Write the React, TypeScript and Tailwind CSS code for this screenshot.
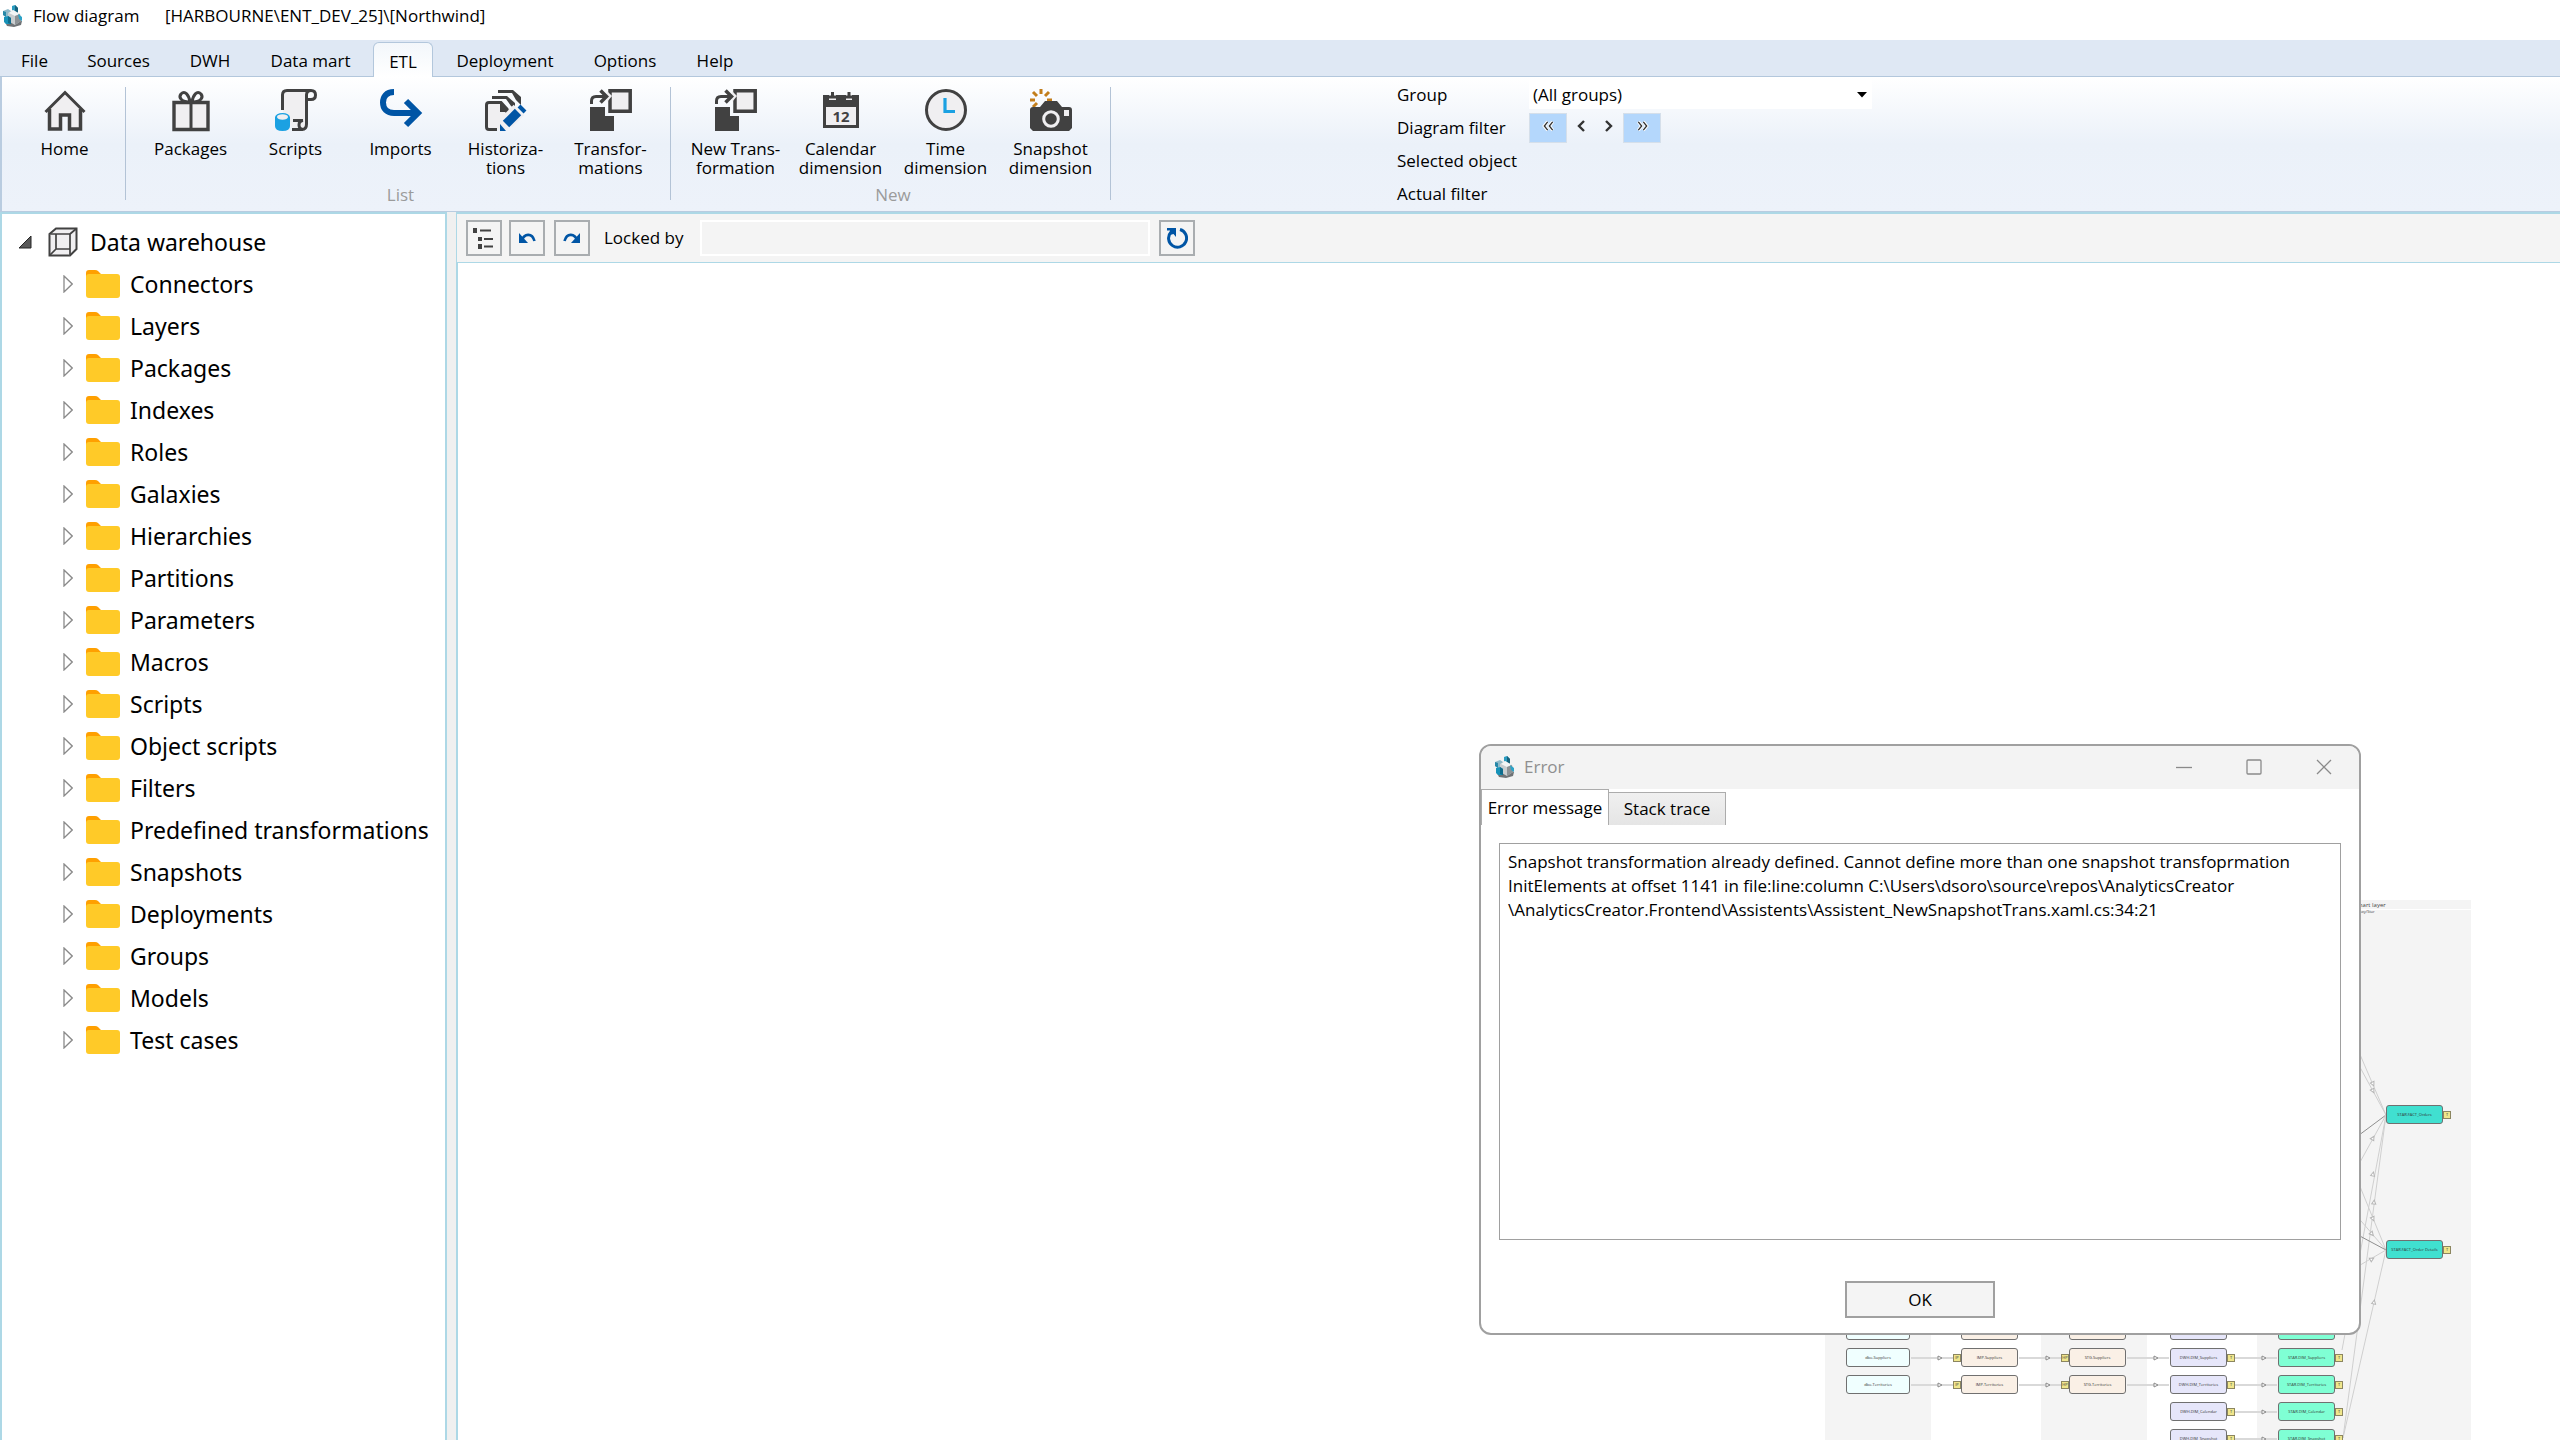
import React from "react";

const DARK = "#414141";
const PALE = "#f0eff1";
const BLUE = "#0055a5";

type IconProps = { children: React.ReactNode };

function RibbonIcon({ children }: IconProps) {
  return (
    <svg viewBox="0 0 42 42" className="h-[42px] w-[42px] overflow-visible" fill="none" aria-hidden="true">
      {children}
    </svg>
  );
}

function AppLogo() {
  return (
    <svg viewBox="0 0 22 24" className="h-6 w-[22px] shrink-0" aria-hidden="true">
      <path d="M3 18 L10 15 L20 17 L19 21 L12 23 L5 22 Z" fill="#6f7376" />
      <path d="M10 2 L13 1 L16 4 L16 9 L10 9 Z" fill="#2b9cc0" />
      <path d="M13 1 L16 4 L16 9 L13 8 Z" fill="#17627c" />
      <path d="M1 7 L6 5 L9 7 L9 11 L4 13 L1 11 Z" fill="#8fb9c8" />
      <path d="M1 7 L4 8 L4 13 L1 11 Z" fill="#2788a8" />
      <path d="M6 9 L11 6 L18 10 L19 17 L13 21 L6 17 Z" fill="#c9cdcf" />
      <path d="M11 6 L18 10 L13 12 L7 9 Z" fill="#f3f5f5" />
      <path d="M13 12 L18 10 L19 17 L13 21 Z" fill="#8d9295" />
      <path d="M2 13 L6 12 L9 14 L9 20 L4 20 L2 18 Z" fill="#1792b8" />
      <path d="M16 10 L20 13 L20 17 L17 15 Z" fill="#2ba3c8" />
      <path d="M6 12 L9 14 L9 20 L6 19 Z" fill="#0f6c8c" />
    </svg>
  );
}

function HomeIcon() {
  return (
    <RibbonIcon>
      <path d="M5 20 L21 4 L37 20 V40 H26 V26 H16 V40 H5 Z" fill={PALE} />
      <path d="M1.500 23 L21 3.500 L40.500 23" stroke={DARK} strokeWidth="3" />
      <path d="M5.500 20 V40 H16.500 V26 H25.500 V40 H36.500 V20" stroke={DARK} strokeWidth="3.500" />
    </RibbonIcon>
  );
}

function GiftIcon() {
  return (
    <RibbonIcon>
      <path d="M4 13.500 H38 V40.500 H4 Z" fill={PALE} stroke={DARK} strokeWidth="3.400" />
      <path d="M21 13 V40" stroke={DARK} strokeWidth="3" />
      <path
        d="M20 13 C12 13 8 9 11 5 C15 1 19 6 20 13 M22 13 C30 13 34 9 31 5 C27 1 23 6 22 13"
        stroke={DARK}
        strokeWidth="3"
      />
    </RibbonIcon>
  );
}

function ScriptIcon() {
  return (
    <RibbonIcon>
      <path d="M8 3 H33 V37 Q32 40 28 40 H18 L8 26 Z" fill={PALE} />
      <path
        d="M7.500 21 V6 Q7.500 1.500 12 1.500 H36 M36 1.500 Q31.500 1.500 31.500 6 V35 Q31.500 40.500 27 40.500 H17"
        stroke={DARK}
        strokeWidth="3"
      />
      <path d="M36 1.500 Q40.500 1.500 40.500 6 Q40.500 10.500 36 10.500 H32" stroke={DARK} strokeWidth="3" />
      <path d="M18 31.500 H28 Q24 32 24 36 Q24 40 28 40.500" stroke={DARK} strokeWidth="3" />
      <path d="M0 28 V37 Q0 42 7.500 42 Q15 42 15 37 V28 Z" fill="#1ba1e2" />
      <ellipse cx="7.500" cy="28.500" rx="7.500" ry="4.500" fill="#1ba1e2" />
      <ellipse cx="7.500" cy="28" rx="5.500" ry="2.700" fill={PALE} />
    </RibbonIcon>
  );
}

function ImportIcon() {
  return (
    <RibbonIcon>
      <path d="M14 3 C6 3 3 8 3 13.500 C3 20 7 24 14 24 H37" stroke={BLUE} strokeWidth="6" />
      <path d="M26 12 L38 24 L26 36" stroke={BLUE} strokeWidth="6" />
    </RibbonIcon>
  );
}

function HistoryIcon() {
  return (
    <RibbonIcon>
      <path d="M13 1 H28 L36 8 V16 L31 11 L27 4 H13 Z" fill={DARK} />
      <path d="M7 7 H22 L30 14 V20 L26 17 L21 10 H7 Z" fill={DARK} />
      <path d="M3 13.500 H15 L23 20 V40.500 H5 Q1.500 40.500 1.500 37 V15 Q1.500 13.500 3 13.500 Z" fill={PALE} />
      <path d="M12 40.500 H4 Q1.500 40.500 1.500 38 V16 Q1.500 13.500 4 13.500 H16 L22 20 V24" stroke={DARK} strokeWidth="3" />
      <path d="M15 13 L24 21 V23 H15 Z" fill={DARK} />
      <path d="M22 33 L34 21" stroke={PALE} strokeWidth="15" />
      <path d="M21 35 L33 23" stroke={BLUE} strokeWidth="9" />
      <path d="M34 17 L40 23" stroke={BLUE} strokeWidth="4" />
      <path d="M15 35 L21 42 H15 Z" fill={BLUE} />
    </RibbonIcon>
  );
}

function TransformIcon() {
  return (
    <RibbonIcon>
      <path d="M0 18 H15 V27 H24 V42 H0 Z" fill={DARK} />
      <path d="M20 1.800 H40.200 V22.200 H20 Z" fill={PALE} stroke={DARK} strokeWidth="3.500" />
      <path d="M17 2 L22 7 L17 13 Z" fill={PALE} />
      <path d="M1.500 15 V12 Q1.500 7.500 6 7.500 H16" stroke={DARK} strokeWidth="3" />
      <path d="M10.500 1.500 L16.500 7.500 L10.500 13.500" stroke={DARK} strokeWidth="3.500" />
    </RibbonIcon>
  );
}

function CalendarIcon() {
  return (
    <RibbonIcon>
      <path d="M4.500 8 H37.500 V37.500 H4.500 Z" fill={PALE} stroke={DARK} strokeWidth="3" />
      <path d="M3 6 H9 V11 H16 V6 H26 V11 H32 V6 H39 V18 H3 Z" fill={DARK} />
      <path d="M12.500 3 V9 M29 3 V9" stroke={DARK} strokeWidth="3" />
      <text x="21" y="33" textAnchor="middle" fontSize="15" fontWeight="700" fill={DARK} className="font-['Noto_Sans',sans-serif]">
        12
      </text>
    </RibbonIcon>
  );
}

function ClockIcon() {
  return (
    <RibbonIcon>
      <circle cx="21" cy="21" r="19.500" fill={PALE} stroke={DARK} strokeWidth="3" />
      <path d="M20 9 V22.500 H30" stroke="#1ba1e2" strokeWidth="3.200" />
    </RibbonIcon>
  );
}

function CameraIcon() {
  return (
    <RibbonIcon>
      <path
        d="M11 0 V5 M3 3 L7 7 M19 3 L15 7 M0 11 H5 M17 11 H22 M3 18 L7 14"
        stroke="#c27d1a"
        strokeWidth="3"
      />
      <path d="M3 18 H10 L15 12 H27 L32 18 H39 Q42 18 42 21 V39 L39 42 H3 L0 39 V21 Q0 18 3 18 Z" fill={DARK} />
      <circle cx="21" cy="30" r="7.300" fill={DARK} stroke={PALE} strokeWidth="3" />
      <path d="M34 21 H39 V27 H34 Z" fill={PALE} />
    </RibbonIcon>
  );
}

type Tool = { label: string[]; icon: React.ReactNode };

const listTools: Tool[] = [
  { label: ["Packages"], icon: <GiftIcon /> },
  { label: ["Scripts"], icon: <ScriptIcon /> },
  { label: ["Imports"], icon: <ImportIcon /> },
  { label: ["Historiza-", "tions"], icon: <HistoryIcon /> },
  { label: ["Transfor-", "mations"], icon: <TransformIcon /> },
];

const newTools: Tool[] = [
  { label: ["New Trans-", "formation"], icon: <TransformIcon /> },
  { label: ["Calendar", "dimension"], icon: <CalendarIcon /> },
  { label: ["Time", "dimension"], icon: <ClockIcon /> },
  { label: ["Snapshot", "dimension"], icon: <CameraIcon /> },
];

function RibbonGroup({ title, tools }: { title: string; tools: Tool[] }) {
  return (
    <div className="flex">
      <div className="flex flex-col justify-between pr-[7px] pl-3">
        <div className="flex">
          {tools.map((tool) => (
            <button key={tool.label.join("")} className="flex w-[105px] flex-col items-center pt-3">
              {tool.icon}
              <span className="mt-2 flex flex-col text-center text-[17px] leading-[19px] whitespace-nowrap">
                {tool.label.map((line) => (
                  <span key={line}>{line}</span>
                ))}
              </span>
            </button>
          ))}
        </div>
        <div className="h-[26px] text-center text-[17px] leading-5 text-[#9b9b9b]">{title}</div>
      </div>
      <div className="mt-[10px] mb-[11px] w-px bg-[#b3c3d6]" />
    </div>
  );
}

const menus = [
  { label: "File", width: "w-[69px]" },
  { label: "Sources", width: "w-[99px]" },
  { label: "DWH", width: "w-[84px]" },
  { label: "Data mart", width: "w-[117px]" },
  { label: "ETL", width: "w-[60px]" },
  { label: "Deployment", width: "w-[144px]" },
  { label: "Options", width: "w-24" },
  { label: "Help", width: "w-[84px]" },
];

function MenuBar() {
  return (
    <nav className="flex h-[37px] items-end border-b border-[#b3c7dc] bg-[#dfe8f4] text-[17px]">
      {menus.map((m) =>
        m.label === "ETL" ? (
          <button
            key={m.label}
            className={
              "relative top-px ml-1 h-[35px] rounded-t-md border border-b-0 border-[#b3c7dc] bg-gradient-to-b from-[#f3f7fb] to-white pt-1 " +
              m.width
            }
          >
            {m.label}
          </button>
        ) : (
          <button key={m.label} className={"h-[34px] pt-1 whitespace-nowrap " + m.width}>
            {m.label}
          </button>
        ),
      )}
    </nav>
  );
}

const chevrons = {
  first: "M8 2 L4 7 L8 12 M14 2 L10 7 L14 12",
  prev: "M12 2 L7 7 L12 12",
  next: "M6 2 L11 7 L6 12",
  last: "M4 2 L8 7 L4 12 M10 2 L14 7 L10 12",
};

function StepButton({ name, path, strong }: { name: string; path: string; strong?: boolean }) {
  return (
    <button
      aria-label={name}
      className={
        strong
          ? "flex h-[30px] w-[38px] items-center justify-center border border-[#d5dfea] bg-[#b4d7fc] pb-1"
          : "flex h-[30px] w-7 items-center justify-center pb-1"
      }
    >
      <svg viewBox="0 0 18 14" className={strong ? "h-3 w-[15px]" : "h-[14px] w-[18px]"} fill="none" aria-hidden="true">
        {strong && <path d={path} stroke="#ffffff" strokeWidth="4" />}
        <path d={path} stroke="#333333" strokeWidth={strong ? "1.600" : "2.400"} />
      </svg>
    </button>
  );
}

function Ribbon() {
  return (
    <div className="flex h-[134px] border-l-2 border-[#b9cce0] bg-gradient-to-b from-white via-[#ebf1f9] to-[#edf2fa]">
      <div className="flex">
        <button className="mr-2 ml-[10px] flex w-[105px] flex-col items-center pt-3">
          <HomeIcon />
          <span className="mt-2 text-[17px] leading-[19px]">Home</span>
        </button>
        <div className="mt-[10px] mb-[11px] w-px bg-[#b3c3d6]" />
      </div>
      <RibbonGroup title="List" tools={listTools} />
      <RibbonGroup title="New" tools={newTools} />
      <div className="ml-[286px] grid grid-cols-[132px_343px] auto-rows-[33px] items-center pt-px text-[17px]">
        <label htmlFor="group">Group</label>
        <div className="relative h-[29px]">
          <select id="group" className="h-full w-full appearance-none bg-white pr-6 pl-1 leading-5">
            <option>(All groups)</option>
          </select>
          <svg viewBox="0 0 10 6" className="pointer-events-none absolute top-3 right-[5px] h-[6px] w-[10px]" aria-hidden="true">
            <path d="M0 0 H10 L5 5.500 Z" fill="#000000" />
          </svg>
        </div>
        <span>Diagram filter</span>
        <div className="flex items-center">
          <StepButton name="First" path={chevrons.first} strong />
          <StepButton name="Previous" path={chevrons.prev} />
          <StepButton name="Next" path={chevrons.next} />
          <StepButton name="Last" path={chevrons.last} strong />
        </div>
        <span>Selected object</span>
        <span />
        <span>Actual filter</span>
        <span />
      </div>
    </div>
  );
}

const folders = [
  "Connectors", "Layers", "Packages", "Indexes", "Roles", "Galaxies", "Hierarchies", "Partitions", "Parameters",
  "Macros", "Scripts", "Object scripts", "Filters", "Predefined transformations", "Snapshots", "Deployments",
  "Groups", "Models", "Test cases",
];

function FolderTree() {
  return (
    <aside className="w-[447px] shrink-0 overflow-hidden border-2 border-b-0 border-[#add8e6] bg-white pt-[7px] font-['Noto_Sans','Open_Sans',sans-serif] text-[23px] leading-[30px]">
      <button className="flex h-[42px] items-center pl-4 whitespace-nowrap">
        <svg viewBox="0 0 14 14" className="h-[14px] w-[14px]" aria-hidden="true">
          <path d="M1 13 L13 1 V13 Z" fill="#595959" stroke="#262626" />
        </svg>
        <svg viewBox="0 0 30 30" className="ml-4 h-[30px] w-[30px]" fill={PALE} stroke={DARK} strokeWidth="2" aria-hidden="true">
          <path d="M1.500 7 L8 1.500 H28.500 V22 L22 28.500 H1.500 Z" />
          <path d="M1.500 7 H22 V28.500 M22 7 L28.500 1.500 M8 7 V22 H22 M8 22 L1.500 28.500" strokeWidth="1.700" />
        </svg>
        <span className="ml-3">Data warehouse</span>
      </button>
      <ul>
        {folders.map((name) => (
          <li key={name}>
            <button className="flex h-[42px] items-center pl-[61px] whitespace-nowrap">
              <svg viewBox="0 0 10 18" className="h-[18px] w-[10px]" fill="white" stroke="#8a8a8a" strokeWidth="1.300" aria-hidden="true">
                <path d="M1 1 L9.200 9 L1 17 Z" />
              </svg>
              <svg viewBox="0 0 34 28" className="ml-[13px] h-7 w-[34px]" aria-hidden="true">
                <path d="M0 12 V3 Q0 0 3 0 H9 Q11 0 12 1 L15 4 H30 V12 Z" fill="#ffa000" />
                <rect y="4" width="34" height="24" rx="3" fill="#ffca28" />
              </svg>
              <span className="ml-[10px]">{name}</span>
            </button>
          </li>
        ))}
      </ul>
    </aside>
  );
}

function Toolbar() {
  const square = "flex h-9 w-9 items-center justify-center border-2 border-[#a9adb0] bg-[#f4f4f4]";
  return (
    <div className="flex h-[51px] items-center border-t-2 border-b border-l border-[#add8e6] bg-[#f4f4f4] pl-[9px] text-[17px]">
      <button aria-label="Structure" className={square}>
        <svg viewBox="0 0 22 22" className="h-[22px] w-[22px]" aria-hidden="true">
          <path d="M0 1 H4 V6 H0 Z M5 10 H9 V14 H5 Z M5 17 H9 V22 H5 Z M7 2.500 H18 V4.500 H7 Z M11 11 H20 V13 H11 Z M11 18.500 H20 V20.500 H11 Z" fill={DARK} />
        </svg>
      </button>
      <button aria-label="Undo" className={"ml-[7px] " + square}>
        <svg viewBox="0 0 18 12" className="h-3 w-[18px]" fill="none" aria-hidden="true">
          <path d="M4 8 C6 2 14 0 16.500 9" stroke={BLUE} strokeWidth="2.600" />
          <path d="M1 1 V11 H10 Z" fill={BLUE} />
        </svg>
      </button>
      <button aria-label="Redo" className={"ml-[9px] " + square}>
        <svg viewBox="0 0 18 12" className="h-3 w-[18px]" fill="none" aria-hidden="true">
          <path d="M14 8 C12 2 4 0 1.500 9" stroke={BLUE} strokeWidth="2.600" />
          <path d="M17 1 V11 H8 Z" fill={BLUE} />
        </svg>
      </button>
      <label htmlFor="locked" className="ml-[14px] w-[96px]">
        Locked by
      </label>
      <input id="locked" readOnly className="h-9 w-[450px] border-2 border-white bg-[#f4f4f4] px-1" />
      <button aria-label="Refresh" className={"ml-[9px] " + square}>
        <svg viewBox="0 0 22 22" className="h-[22px] w-[22px]" fill="none" aria-hidden="true">
          <path d="M14 2.500 A9 9 0 1 1 5 5" stroke={BLUE} strokeWidth="3" />
          <path d="M1 1 H10 V10 L7.500 7 L4 8 V3.500 H1 Z" fill={BLUE} />
        </svg>
      </button>
    </div>
  );
}

type NodeProps = { x: number; y: number; w: number; color: string; label: string; tag?: string; tagSide?: "left" | "right" };

function DiagramNode({ x, y, w, color, label, tag, tagSide }: NodeProps) {
  return (
    <div className="absolute flex items-center" style={{ left: tagSide === "left" ? x - 8 : x, top: y }}>
      {tag && tagSide === "left" && <Tag text={tag} />}
      <div
        className="flex h-[19px] items-center justify-center rounded-[3px] border border-[#707070] text-[4px] leading-none whitespace-nowrap text-[#333333]"
        style={{ width: w, backgroundColor: color }}
      >
        {label}
      </div>
      {tag && tagSide === "right" && <Tag text={tag} />}
    </div>
  );
}

function Tag({ text }: { text: string }) {
  return (
    <div className="flex h-2 w-2 items-center justify-center border border-[#8c8660] bg-[#f0e68c] text-[4px] leading-none text-[#333333]">
      {text}
    </div>
  );
}

const rows = [
  { name: "Shippers", y: 421, source: true },
  { name: "Suppliers", y: 448, source: true },
  { name: "Territories", y: 475, source: true },
  { name: "Calendar", y: 502, source: false },
  { name: "Snapshot", y: 529, source: false },
];

const factLinks = [
  { d: "M518 115 L561 215", dark: false },
  { d: "M518 136 L561 215", dark: false },
  { d: "M518 247 L561 215", dark: true },
  { d: "M518 293 L561 215", dark: false },
  { d: "M517 450 L561 215", dark: false },
  { d: "M518 538 L561 215", dark: false },
  { d: "M518 245 L561 350", dark: false },
  { d: "M518 300 L561 350", dark: false },
  { d: "M518 327 L561 350", dark: true },
  { d: "M518 375 L561 350", dark: false },
  { d: "M518 538 L561 350", dark: false },
];

const factArrows = [
  { x: 548, y: 184, r: 65 },
  { x: 548, y: 191, r: 62 },
  { x: 548, y: 238, r: -60 },
  { x: 548, y: 274, r: -78 },
  { x: 549, y: 302, r: -83 },
  { x: 548, y: 319, r: 66 },
  { x: 547, y: 334, r: 50 },
  { x: 547, y: 359, r: -30 },
  { x: 549, y: 402, r: -78 },
];

function FlowDiagram() {
  return (
    <div className="absolute top-[637px] left-[1367px] h-[560px] w-[660px]">
      <div className="absolute top-0 left-0 h-full w-[106px] bg-[#f4f4f4]" />
      <div className="absolute top-0 left-[216px] h-full w-[106px] bg-[#f4f4f4]" />
      <div className="absolute top-0 left-[432px] h-full w-[214px] bg-[#f4f4f4] text-center text-[#444444]">
        <div className="h-[10px] border-b border-white text-[6px] leading-[10px]">Data mart layer</div>
        <div className="text-[4px] leading-[4px]">Galaxy/Star</div>
      </div>
      <svg viewBox="0 0 660 560" className="absolute inset-0 h-full w-full" fill="none" aria-hidden="true">
        {factLinks.map((l) => (
          <path key={l.d} d={l.d} stroke={l.dark ? "#8f8f8f" : "#cfcfcf"} />
        ))}
        {factArrows.map((a) => (
          <path
            key={a.y}
            d="M-2 -2 L2 0 L-2 2 Z"
            transform={`translate(${a.x} ${a.y}) rotate(${a.r})`}
            fill="white"
            stroke="#b5b5b5"
          />
        ))}
        {rows.map((r) => (
          <g key={r.name}>
            {(r.source ? [86, 194, 302] : []).concat(410).map((x) => (
              <g key={x}>
                <path d={`M${x} ${r.y + 10} H${x + 42}`} stroke="#d9d9d9" strokeWidth="2" />
                <path d={`M${x + 27} ${r.y + 8} L${x + 31} ${r.y + 10} L${x + 27} ${r.y + 12} Z`} fill="white" stroke="#8a8a8a" />
              </g>
            ))}
          </g>
        ))}
      </svg>
      {rows.map((r) => (
        <React.Fragment key={r.name}>
          {r.source && (
            <>
              <DiagramNode x={21} y={r.y} w={64} color="#f0ffff" label={"dbo." + r.name} />
              <DiagramNode x={136} y={r.y} w={57} color="#faf0e6" label={"IMP." + r.name} tag="IP" tagSide="left" />
              <DiagramNode x={244} y={r.y} w={57} color="#faf0e6" label={"STG." + r.name} tag="HP" tagSide="left" />
            </>
          )}
          <DiagramNode x={345} y={r.y} w={57} color="#e6e6fa" label={"DWH.DIM_" + r.name} tag="T" tagSide="right" />
          <DiagramNode x={453} y={r.y} w={57} color="#7fffd4" label={"STAR.DIM_" + r.name} tag="T" tagSide="right" />
        </React.Fragment>
      ))}
      <DiagramNode x={561} y={205} w={57} color="#40e0d0" label="STAR.FACT_Orders" tag="T" tagSide="right" />
      <DiagramNode x={561} y={340} w={57} color="#40e0d0" label="STAR.FACT_Order Details" tag="T" tagSide="right" />
    </div>
  );
}

const errorText = [
  "Snapshot transformation already defined. Cannot define more than one snapshot transfoprmation",
  "InitElements at offset 1141 in file:line:column C:\\Users\\dsoro\\source\\repos\\AnalyticsCreator",
  "\\AnalyticsCreator.Frontend\\Assistents\\Assistent_NewSnapshotTrans.xaml.cs:34:21",
].join("\n");

function WindowButton({ name, path }: { name: string; path: string }) {
  return (
    <button aria-label={name} className="flex h-full w-[70px] items-center justify-center">
      <svg viewBox="0 0 16 16" className="h-4 w-4" fill="none" stroke="#8a8a8a" strokeWidth="1.300" aria-hidden="true">
        <path d={path} />
      </svg>
    </button>
  );
}

function ErrorDialog() {
  return (
    <div
      role="dialog"
      aria-label="Error"
      className="absolute top-[744px] left-[1479px] flex h-[591px] w-[882px] flex-col overflow-hidden rounded-xl border-2 border-[#a0a0a0] bg-white text-[17px]"
    >
      <div className="flex h-[43px] shrink-0 items-center bg-[#f3f3f3] pb-[2px] pl-[13px] text-[#8f8f8f]">
        <AppLogo />
        <span className="ml-2 grow">Error</span>
        <WindowButton name="Minimize" path="M0 8.500 H16" />
        <WindowButton name="Maximize" path="M2 1 H14 Q15 1 15 2 V14 Q15 15 14 15 H2 Q1 15 1 14 V2 Q1 1 2 1 Z" />
        <WindowButton name="Close" path="M1 1 L15 15 M15 1 L1 15" />
      </div>
      <div role="tablist" className="flex h-9 shrink-0 items-end">
        <button role="tab" aria-selected="true" className="h-9 w-32 border border-b-0 border-[#acacac] bg-white whitespace-nowrap">
          Error message
        </button>
        <button
          role="tab"
          aria-selected="false"
          className="h-[33px] w-[117px] border border-b-0 border-l-0 border-[#acacac] bg-gradient-to-b from-[#f0f0f0] to-[#e5e5e5] whitespace-nowrap"
        >
          Stack trace
        </button>
      </div>
      <textarea
        readOnly
        aria-label="Error message"
        value={errorText}
        className="mx-[18px] mt-[18px] h-[397px] shrink-0 resize-none overflow-hidden border border-[#a0a0a0] bg-white px-2 py-[6px] leading-6 whitespace-pre outline-none"
      />
      <button className="mt-[41px] h-[37px] w-[150px] self-center border-2 border-[#a0a0a0] bg-[#f4f4f4]">OK</button>
    </div>
  );
}

export default function App() {
  return (
    <div className="relative flex h-screen flex-col overflow-hidden bg-white font-['Open_Sans','Noto_Sans',sans-serif] text-black">
      <header className="flex h-10 shrink-0 items-center pb-2 pl-[2px] text-[17px] whitespace-nowrap">
        <AppLogo />
        <span className="ml-[9px] w-[132px]">Flow diagram</span>
        <span>[HARBOURNE\ENT_DEV_25]\[Northwind]</span>
      </header>
      <MenuBar />
      <Ribbon />
      <main className="flex min-h-0 grow border-t border-[#b9cce0] bg-[#f0f0f0]">
        <FolderTree />
        <section className="ml-[9px] flex min-w-0 grow flex-col">
          <Toolbar />
          <div className="relative grow overflow-hidden border-l-2 border-[#add8e6] bg-white">
            <FlowDiagram />
          </div>
        </section>
      </main>
      <ErrorDialog />
    </div>
  );
}
